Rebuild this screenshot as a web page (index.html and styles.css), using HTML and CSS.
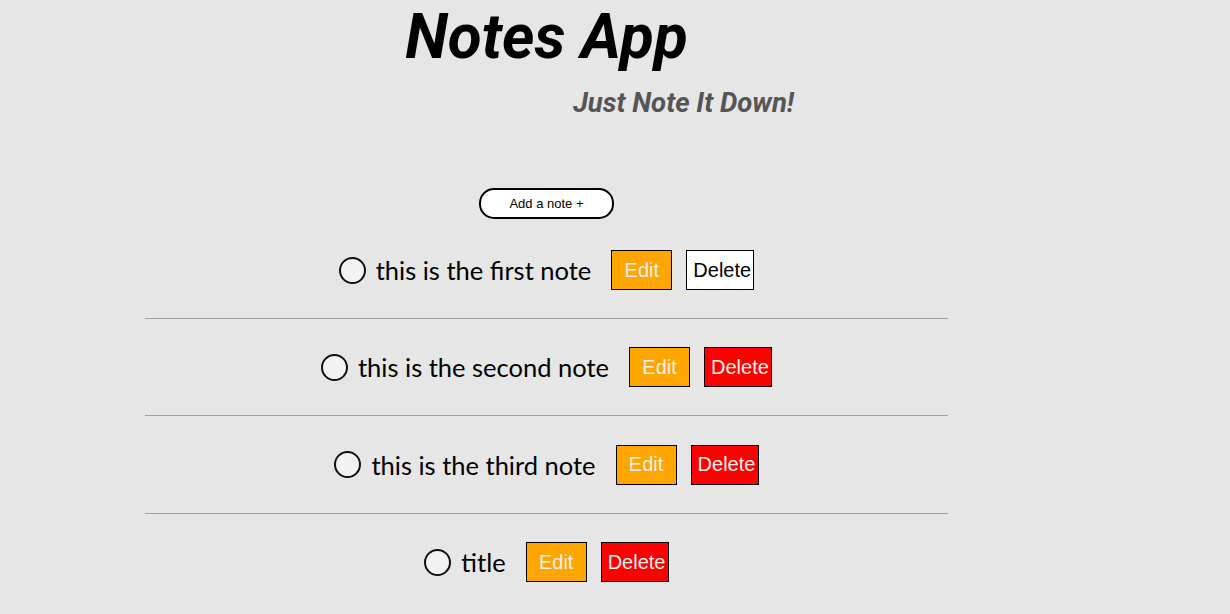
FILE: index.html
```html
<!DOCTYPE html>
<html>
<head>
<meta charset="utf-8">
<link rel="stylesheet" href="styles.css">
</head>
<body>
<main class="app">
  <header class="header">
    <h1 class="title">Notes App</h1>
    <p class="subtitle">Just Note It Down!</p>
  </header>
  <div class="add-wrap">
    <button class="add-btn">Add a note +</button>
  </div>
  <ul class="notes">
    <li class="note">
      <span class="check"></span>
      <span class="note-text">this is the first note</span>
      <button class="btn edit">Edit</button>
      <button class="btn delete delete-hover">Delete</button>
    </li>
    <li class="note">
      <span class="check"></span>
      <span class="note-text">this is the second note</span>
      <button class="btn edit">Edit</button>
      <button class="btn delete">Delete</button>
    </li>
    <li class="note tall">
      <span class="check"></span>
      <span class="note-text">this is the third note</span>
      <button class="btn edit">Edit</button>
      <button class="btn delete">Delete</button>
    </li>
    <li class="note last">
      <span class="check"></span>
      <span class="note-text">title</span>
      <button class="btn edit">Edit</button>
      <button class="btn delete">Delete</button>
    </li>
  </ul>
</main>
</body>
</html>
```

FILE: styles.css
```css
html, body {
  margin: 0;
  padding: 0;
  background: #e6e6e6;
  height: 100%;
  overflow: hidden;
}

.app {
  width: 803px;
  margin-left: 145px;
  font-family: "Liberation Sans", Arial, sans-serif;
}

.header {
  text-align: center;
}

.title {
  margin: 0;
  font-family: Roboto, sans-serif;
  font-weight: 700;
  font-style: italic;
  font-size: 62px;
  line-height: normal;
  color: #000;
}

.subtitle {
  margin: 15px 0 0;
  padding-left: 274px;
  font-family: Roboto, sans-serif;
  font-weight: 700;
  font-style: italic;
  font-size: 27.5px;
  line-height: 30px;
  color: #555;
}

.add-wrap {
  display: flex;
  justify-content: center;
  margin-top: 70px;
}

.add-btn {
  width: 135px;
  height: 31px;
  border: 2px solid #000;
  border-radius: 15px;
  background: #fff;
  font-family: "Liberation Sans", Arial, sans-serif;
  font-size: 13px;
  color: #000;
  padding: 0;
}

.notes {
  list-style: none;
  margin: 3px 0 0;
  padding: 0;
}

.note {
  height: 96px;
  display: flex;
  align-items: center;
  justify-content: center;
  border-bottom: 1px solid #a0a0a0;
}

.note.tall {
  height: 97px;
}

.note.last {
  border-bottom: none;
}

.check {
  width: 23px;
  height: 23px;
  border: 2px solid #111;
  border-radius: 50%;
  background: #f2f2f2;
  margin-right: 10px;
}

.note-text {
  font-family: Lato, sans-serif;
  font-size: 25.5px;
  color: #000;
  margin-right: 20px;
}

.btn {
  height: 40px;
  border: 1px solid #000;
  font-family: "Liberation Sans", Arial, sans-serif;
  font-size: 20px;
  padding: 0 6px;
  color: #f0f0f0;
}

.edit {
  width: 61px;
  background: #ffa500;
  margin-right: 14px;
}

.delete {
  width: 68px;
  background: #ff0000;
}

.delete-hover {
  background: #fff;
  color: #000;
}
```
